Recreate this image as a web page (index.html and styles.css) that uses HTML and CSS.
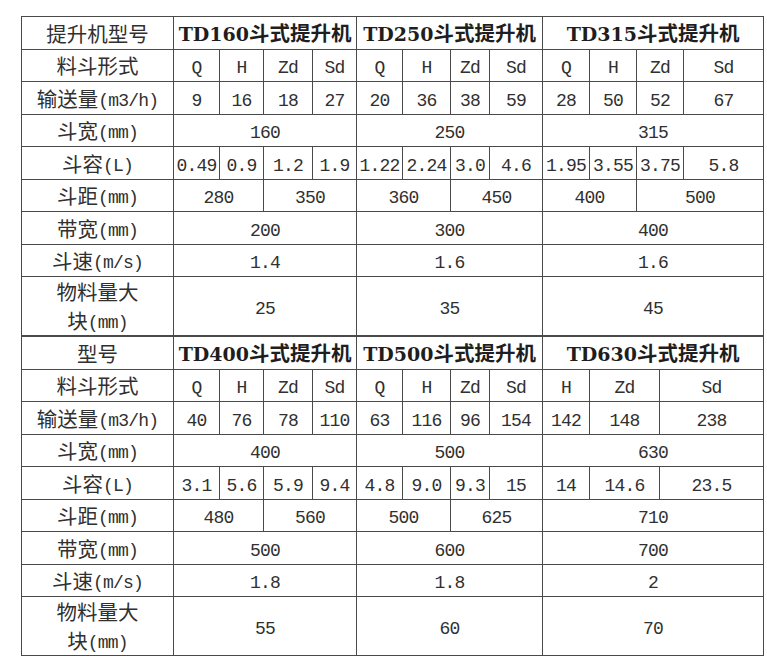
FILE: index.html
```html
<!DOCTYPE html>
<html lang="zh-CN">
<head>
<meta charset="utf-8">
<title>斗式提升机参数</title>
<link rel="stylesheet" href="styles.css">
</head>
<body>
<div class="sheet">
  <table class="spec">
    <colgroup>
      <col class="c-label"><col class="c46"><col class="c44"><col class="c49"><col class="c44">
      <col class="c46"><col class="c48"><col class="c39"><col class="c53">
      <col class="c47"><col class="c47"><col class="c47"><col class="c80">
    </colgroup>
    <tr class="r">
      <td class="lbl">提升机型号</td>
      <td colspan="4" class="hd"><span class="hl">TD160</span>斗式提升机</td>
      <td colspan="4" class="hd"><span class="hl">TD250</span>斗式提升机</td>
      <td colspan="4" class="hd"><span class="hl">TD315</span>斗式提升机</td>
    </tr>
    <tr class="r">
      <td class="lbl">料斗形式</td>
      <td class="n">Q</td><td class="n">H</td><td class="n">Zd</td><td class="n">Sd</td>
      <td class="n">Q</td><td class="n">H</td><td class="n">Zd</td><td class="n">Sd</td>
      <td class="n">Q</td><td class="n">H</td><td class="n">Zd</td><td class="n">Sd</td>
    </tr>
    <tr class="r">
      <td class="lbl">输送量<span class="u">(m3/h)</span></td>
      <td class="n">9</td><td class="n">16</td><td class="n">18</td><td class="n">27</td>
      <td class="n">20</td><td class="n">36</td><td class="n">38</td><td class="n">59</td>
      <td class="n">28</td><td class="n">50</td><td class="n">52</td><td class="n">67</td>
    </tr>
    <tr class="r">
      <td class="lbl">斗宽<span class="u">(mm)</span></td>
      <td colspan="4" class="n">160</td><td colspan="4" class="n">250</td><td colspan="4" class="n">315</td>
    </tr>
    <tr class="r">
      <td class="lbl">斗容<span class="u">(L)</span></td>
      <td class="n">0.49</td><td class="n">0.9</td><td class="n">1.2</td><td class="n">1.9</td>
      <td class="n">1.22</td><td class="n">2.24</td><td class="n">3.0</td><td class="n">4.6</td>
      <td class="n">1.95</td><td class="n">3.55</td><td class="n">3.75</td><td class="n">5.8</td>
    </tr>
    <tr class="r">
      <td class="lbl">斗距<span class="u">(mm)</span></td>
      <td colspan="2" class="n">280</td><td colspan="2" class="n">350</td>
      <td colspan="2" class="n">360</td><td colspan="2" class="n">450</td>
      <td colspan="2" class="n">400</td><td colspan="2" class="n">500</td>
    </tr>
    <tr class="r">
      <td class="lbl">带宽<span class="u">(mm)</span></td>
      <td colspan="4" class="n">200</td><td colspan="4" class="n">300</td><td colspan="4" class="n">400</td>
    </tr>
    <tr class="r">
      <td class="lbl">斗速<span class="u">(m/s)</span></td>
      <td colspan="4" class="n">1.4</td><td colspan="4" class="n">1.6</td><td colspan="4" class="n">1.6</td>
    </tr>
    <tr class="r2">
      <td class="lbl two">物料量大<br>块<span class="u">(mm)</span></td>
      <td colspan="4" class="n">25</td><td colspan="4" class="n">35</td><td colspan="4" class="n">45</td>
    </tr>
  </table>

  <table class="spec">
    <colgroup>
      <col class="c-label"><col class="c46"><col class="c44"><col class="c49"><col class="c44">
      <col class="c46"><col class="c48"><col class="c39"><col class="c53">
      <col class="c47"><col class="c70"><col class="c104">
    </colgroup>
    <tr class="r">
      <td class="lbl">型号</td>
      <td colspan="4" class="hd"><span class="hl">TD400</span>斗式提升机</td>
      <td colspan="4" class="hd"><span class="hl">TD500</span>斗式提升机</td>
      <td colspan="3" class="hd"><span class="hl">TD630</span>斗式提升机</td>
    </tr>
    <tr class="r">
      <td class="lbl">料斗形式</td>
      <td class="n">Q</td><td class="n">H</td><td class="n">Zd</td><td class="n">Sd</td>
      <td class="n">Q</td><td class="n">H</td><td class="n">Zd</td><td class="n">Sd</td>
      <td class="n">H</td><td class="n">Zd</td><td class="n">Sd</td>
    </tr>
    <tr class="r">
      <td class="lbl">输送量<span class="u">(m3/h)</span></td>
      <td class="n">40</td><td class="n">76</td><td class="n">78</td><td class="n">110</td>
      <td class="n">63</td><td class="n">116</td><td class="n">96</td><td class="n">154</td>
      <td class="n">142</td><td class="n">148</td><td class="n">238</td>
    </tr>
    <tr class="r">
      <td class="lbl">斗宽<span class="u">(mm)</span></td>
      <td colspan="4" class="n">400</td><td colspan="4" class="n">500</td><td colspan="3" class="n">630</td>
    </tr>
    <tr class="r">
      <td class="lbl">斗容<span class="u">(L)</span></td>
      <td class="n">3.1</td><td class="n">5.6</td><td class="n">5.9</td><td class="n">9.4</td>
      <td class="n">4.8</td><td class="n">9.0</td><td class="n">9.3</td><td class="n">15</td>
      <td class="n">14</td><td class="n">14.6</td><td class="n">23.5</td>
    </tr>
    <tr class="r">
      <td class="lbl">斗距<span class="u">(mm)</span></td>
      <td colspan="2" class="n">480</td><td colspan="2" class="n">560</td>
      <td colspan="2" class="n">500</td><td colspan="2" class="n">625</td>
      <td colspan="3" class="n">710</td>
    </tr>
    <tr class="r">
      <td class="lbl">带宽<span class="u">(mm)</span></td>
      <td colspan="4" class="n">500</td><td colspan="4" class="n">600</td><td colspan="3" class="n">700</td>
    </tr>
    <tr class="r">
      <td class="lbl">斗速<span class="u">(m/s)</span></td>
      <td colspan="4" class="n">1.8</td><td colspan="4" class="n">1.8</td><td colspan="3" class="n">2</td>
    </tr>
    <tr class="r2">
      <td class="lbl two">物料量大<br>块<span class="u">(mm)</span></td>
      <td colspan="4" class="n">55</td><td colspan="4" class="n">60</td><td colspan="3" class="n">70</td>
    </tr>
  </table>
</div>
</body>
</html>
```

FILE: styles.css
```css
html, body {
  margin: 0;
  padding: 0;
  background: #ffffff;
}

.sheet {
  padding: 16px 0 0 21px;
  width: 742px;
}

.spec {
  border-collapse: collapse;
  table-layout: fixed;
  width: 742px;
  color: #303030;
  font-family: "Noto Sans CJK SC", sans-serif;
  font-size: 20.5px;
}

.spec td {
  border: 1px solid #4a4a4a;
  padding: 0;
  text-align: center;
  vertical-align: middle;
  white-space: nowrap;
  overflow: visible;
  line-height: 24px;
}

.c-label { width: 152px; }
.c46 { width: 46px; }
.c44 { width: 44px; }
.c49 { width: 49px; }
.c48 { width: 48px; }
.c39 { width: 39px; }
.c53 { width: 53px; }
.c47 { width: 47px; }
.c80 { width: 80px; }
.c70 { width: 70px; }
.c104 { width: 104px; }

.r { height: 32.5px; }
.r2 { height: 59px; }

.lbl {
  font-weight: 400;
}

.lbl.two {
  line-height: 29px;
}

.u {
  font-family: "Liberation Mono", monospace;
  font-size: 18px;
  letter-spacing: -0.8px;
  line-height: 1;
  vertical-align: 1px;
}

.spec td.n {
  font-family: "Liberation Mono", monospace;
  font-size: 18px;
  letter-spacing: -0.8px;
  padding-top: 6px;
}

.hd {
  font-weight: 700;
  color: #1e1e1e;
}

.hl {
  font-family: "DejaVu Serif", serif;
  font-size: 19px;
  font-weight: 700;
}
```
